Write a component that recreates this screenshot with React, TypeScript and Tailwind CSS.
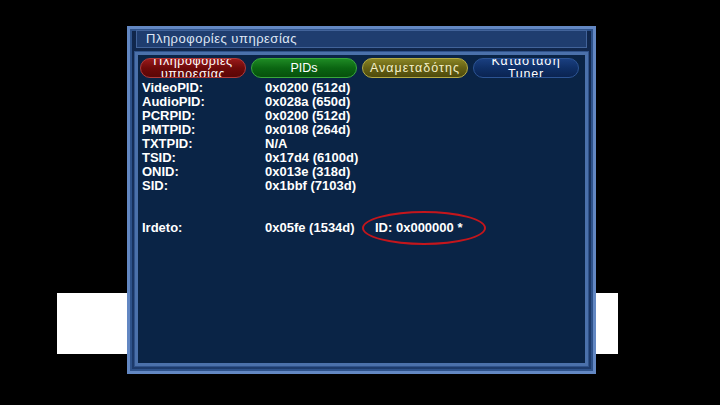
import React from "react";

const rows = [
  ["VideoPID:", "0x0200 (512d)"],
  ["AudioPID:", "0x028a (650d)"],
  ["PCRPID:", "0x0200 (512d)"],
  ["PMTPID:", "0x0108 (264d)"],
  ["TXTPID:", "N/A"],
  ["TSID:", "0x17d4 (6100d)"],
  ["ONID:", "0x013e (318d)"],
  ["SID:", "0x1bbf (7103d)"],
];

const tabs = [
  {
    label: "Πληροφορίες υπηρεσίας",
    cls: "bg-gradient-to-b from-[#9a1a1a] via-[#6e0a0a] to-[#5a0606] border-[#b03a3a] text-white tracking-[0.6px]",
  },
  {
    label: "PIDs",
    cls: "bg-gradient-to-b from-[#1e8a24] via-[#0b6612] to-[#07500c] border-[#39a83c] text-white",
  },
  {
    label: "Αναμεταδότης",
    cls: "bg-gradient-to-b from-[#8a8524] via-[#656014] to-[#4f4b0c] border-[#b4ab46] text-[#f4f0c8] tracking-[1px]",
  },
  {
    label: "Κατασταση Tuner",
    cls: "bg-gradient-to-b from-[#1a3f80] via-[#0f2f66] to-[#0a2452] border-[#2c5494] text-white tracking-[0.8px]",
  },
];

const ServiceInfo = () => {
  return (
    <div
      className="relative w-[720px] h-[405px] bg-black overflow-hidden"
      style={{ fontFamily: '"Liberation Sans", Arial, sans-serif' }}
    >
      {/* white band behind the window */}
      <div className="absolute left-[57px] top-[293px] w-[561px] h-[61px] bg-white" />

      <div className="relative ml-[127px] mt-[26px] w-[469px] h-[348px] flex flex-col border-[3px] border-[#6287c2] bg-gradient-to-b from-[#10264b] to-[#1d3b6c] shadow-[inset_0_0_0_2px_#2e528a]">
        {/* title */}
        <div className="mx-[6px] mt-[1px] h-[18px] flex items-center pl-[9px] bg-[#1f3d6f] border border-[#42639a] text-[13px] text-[#dfe7f5] tracking-[0.5px]">
          Πληροφορίες υπηρεσίας
        </div>

        {/* content panel */}
        <div className="mx-[5px] mt-[4px] mb-[5px] flex-1 flex flex-col border-[3px] border-[#4b71ab] bg-[#0a2446] shadow-[0_0_0_1px_#2f528a]">
          <div className="flex gap-[5px] pl-[2px] pr-[5px] pt-[3px]">
            {tabs.map((t, i) => (
              <div
                key={i}
                className={`w-[106px] h-[20px] rounded-[10px] border flex items-center justify-center overflow-hidden text-[12.5px] leading-[13px] text-center ${t.cls}`}
              >
                <span className="block px-2">{t.label}</span>
              </div>
            ))}
          </div>

          <div className="mt-[3px] pl-[4px] text-white text-[13px] font-bold leading-[14px]">
            {rows.map(([k, v]) => (
              <div key={k} className="flex h-[14px]">
                <span className="w-[123px]">{k}</span>
                <span>{v}</span>
              </div>
            ))}
            <div className="flex h-[14px] mt-[28px]">
              <span className="w-[123px]">Irdeto:</span>
              <span className="w-[110px]">0x05fe (1534d)</span>
              <span className="relative">
                ID: 0x000000 *
                <span className="absolute left-[-13px] top-[-10px] w-[124px] h-[34px] rounded-[50%] border-2 border-[#c4161c]" />
              </span>
            </div>
          </div>
        </div>
      </div>
    </div>
  );
};

export default function App() {
  return <ServiceInfo />;
}
